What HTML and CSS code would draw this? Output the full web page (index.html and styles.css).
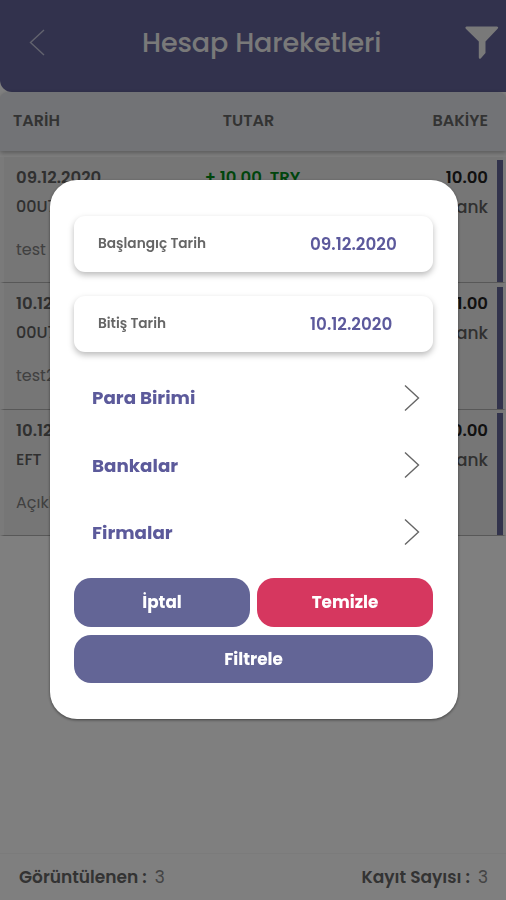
FILE: index.html
```html
<!DOCTYPE html>
<html lang="tr">
<head>
    <meta charset="UTF-8">
    <meta name="viewport" content="width=device-width, initial-scale=1.0">
    <title>Hesap Hareketleri</title>
    <link rel="stylesheet" href="styles.css">
</head>
<body>
    <div class="app">
        <header class="header">
            <svg class="back-icon" width="16" height="27" viewBox="0 0 16 27" fill="none" stroke="#c4c5dc" stroke-width="1.4">
                <path d="M15 1L1.5 13.5L15 26"/>
            </svg>
            <h1 class="title">Hesap Hareketleri</h1>
            <svg class="filter-icon" width="34" height="34" viewBox="0 0 34 34" fill="#f2f2f2">
                <path d="M1.5 0.5H32Q34 1 32.6 2.8L20.5 15.5V27L15.7 32.5Q14 33.4 13.8 31.5V15.5L0.8 2.8Q-0.3 1 1.5 0.5Z"/>
            </svg>
        </header>

        <div class="table-head">
            <span>TARİH</span>
            <span class="th-amount">TUTAR</span>
            <span class="th-balance">BAKİYE</span>
        </div>

        <main class="list">
            <div class="row">
                <div class="cell">
                    <strong>09.12.2020</strong>
                    <span class="code">00U7</span>
                    <span class="note">test</span>
                </div>
                <div class="cell center"><strong class="amount">+ 10.00&nbsp; TRY</strong></div>
                <div class="cell right">
                    <strong class="balance">10.00</strong>
                    <span class="bank">Bank</span>
                </div>
            </div>
            <div class="row">
                <div class="cell">
                    <strong>10.12.2020</strong>
                    <span class="code">00U7</span>
                    <span class="note">test2</span>
                </div>
                <div class="cell center"></div>
                <div class="cell right">
                    <strong class="balance">1.00</strong>
                    <span class="bank">Bank</span>
                </div>
            </div>
            <div class="row">
                <div class="cell">
                    <strong>10.12.2020</strong>
                    <span class="code">EFT</span>
                    <span class="note">Açıklama</span>
                </div>
                <div class="cell center"></div>
                <div class="cell right">
                    <strong class="balance">0.00</strong>
                    <span class="bank">Bank</span>
                </div>
            </div>
        </main>

        <footer class="footer">
            <div><strong>Görüntülenen :</strong><span>3</span></div>
            <div><strong>Kayıt Sayısı :</strong><span>3</span></div>
        </footer>
    </div>

    <div class="overlay">
        <div class="modal">
            <div class="field">
                <span class="field-label">Başlangıç Tarih</span>
                <span class="field-value">09.12.2020</span>
            </div>
            <div class="field">
                <span class="field-label">Bitiş Tarih</span>
                <span class="field-value">10.12.2020</span>
            </div>

            <div class="menu">
                <div class="menu-item">
                    <span>Para Birimi</span>
                    <svg width="16" height="28" viewBox="0 0 16 28" fill="none" stroke="#666" stroke-width="1.4"><path d="M1 1.5L14.5 14L1 26.5"/></svg>
                </div>
                <div class="menu-item">
                    <span>Bankalar</span>
                    <svg width="16" height="28" viewBox="0 0 16 28" fill="none" stroke="#666" stroke-width="1.4"><path d="M1 1.5L14.5 14L1 26.5"/></svg>
                </div>
                <div class="menu-item">
                    <span>Firmalar</span>
                    <svg width="16" height="28" viewBox="0 0 16 28" fill="none" stroke="#666" stroke-width="1.4"><path d="M1 1.5L14.5 14L1 26.5"/></svg>
                </div>
            </div>

            <div class="buttons">
                <button class="btn">İptal</button>
                <button class="btn btn-red">Temizle</button>
                <button class="btn btn-wide">Filtrele</button>
            </div>
        </div>
    </div>
</body>
</html>
```

FILE: styles.css
```css
* {
    box-sizing: border-box;
}

body {
    margin: 0;
    font-family: Poppins, Inter, sans-serif;
    background: #fff;
    color: #666;
}

.app {
    height: 900px;
    display: flex;
    flex-direction: column;
    overflow: hidden;
}

.header {
    height: 92px;
    flex: none;
    display: flex;
    align-items: center;
    padding: 0 7px 7px 29px;
    background: #64649a;
    border-radius: 0 0 0 12px;
}

.title {
    flex: 1;
    margin: 0;
    padding-left: 97px;
    font-size: 27px;
    font-weight: 500;
    line-height: 34px;
    letter-spacing: -0.1px;
    color: #f2f2f2;
    white-space: nowrap;
}

.table-head {
    height: 59px;
    flex: none;
    display: grid;
    grid-template-columns: 1fr 1fr 1fr;
    align-items: center;
    padding: 0 18px 2px 13px;
    background: #e5e6ec;
    border-radius: 8px 8px 0 0;
    box-shadow: 0 2px 5px rgba(0, 0, 0, 0.3);
    font-size: 16px;
    font-weight: 600;
}

.th-amount {
    padding-right: 4px;
    text-align: center;
}

.th-balance {
    text-align: right;
}

.list {
    padding-top: 6px;
}

.row {
    height: 126.4px;
    display: grid;
    grid-template-columns: 1fr 1fr 1fr;
    padding: 10px 8px 0 12px;
    border: solid #b0b0b0;
    border-width: 0 3px 1px 4px;
    border-left-color: #f4f4f4;
    border-right-color: #f4f4f4;
    background: linear-gradient(#646699, #646699) right bottom / 6px 122px no-repeat, #ededed;
}

.cell {
    display: flex;
    flex-direction: column;
    font-size: 16px;
    line-height: 22px;
    color: #606060;
}

.cell strong {
    font-size: 16.5px;
    font-weight: 600;
}

.center {
    align-items: center;
    padding-right: 6px;
}

.right {
    align-items: flex-end;
    padding-right: 7px;
}

.code {
    margin-top: 7px;
    font-weight: 500;
}

.note {
    margin-top: 21px;
    color: #808080;
}

.bank {
    margin-top: 7px;
    font-size: 17px;
    font-weight: 500;
}

.cell .amount {
    color: #008a18;
    white-space: nowrap;
}

.cell .balance {
    color: #222;
}

.footer {
    height: 47px;
    margin-top: auto;
    display: flex;
    justify-content: space-between;
    align-items: center;
    padding: 0 18px 1px 19px;
    border-top: 1px solid #f6f6f6;
    font-size: 17px;
}

.footer strong {
    font-weight: 600;
}

.footer span {
    margin-left: 8px;
    color: #888;
}

.overlay {
    position: fixed;
    inset: 0;
    display: flex;
    justify-content: center;
    align-items: center;
    padding: 0 0 1px 2px;
    background: rgba(0, 0, 0, 0.5);
}

.modal {
    width: 408px;
    height: 539px;
    padding: 36px 25px 0 24px;
    border-radius: 27px;
    background: #fff;
    box-shadow: 0 1px 3px rgba(0, 0, 0, 0.5);
}

.field {
    height: 56px;
    margin-bottom: 24px;
    display: flex;
    align-items: center;
    padding-left: 24px;
    border-radius: 11px;
    box-shadow: 0 3px 6px rgba(0, 0, 0, 0.27);
}

.field-label {
    width: 212px;
    font-size: 13.7px;
    font-weight: 600;
}

.field-value {
    font-size: 16.8px;
    font-weight: 600;
    color: #5c599c;
}

.menu {
    margin-top: -12px;
}

.menu-item {
    height: 67.4px;
    display: flex;
    justify-content: space-between;
    align-items: center;
    padding: 0 13px 0 18px;
    font-size: 18.3px;
    font-weight: 700;
    color: #5c5a9b;
}

.buttons {
    display: grid;
    grid-template-columns: 1fr 1fr;
    gap: 8px 7px;
    margin-top: 12px;
}

.btn {
    height: 48.5px;
    padding: 0;
    border: none;
    border-radius: 17px;
    background: #636596;
    color: #fff;
    font-family: inherit;
    font-size: 16.8px;
    font-weight: 700;
}

.btn-red {
    background: #d6375f;
}

.btn-wide {
    grid-column: 1 / 3;
}
```
